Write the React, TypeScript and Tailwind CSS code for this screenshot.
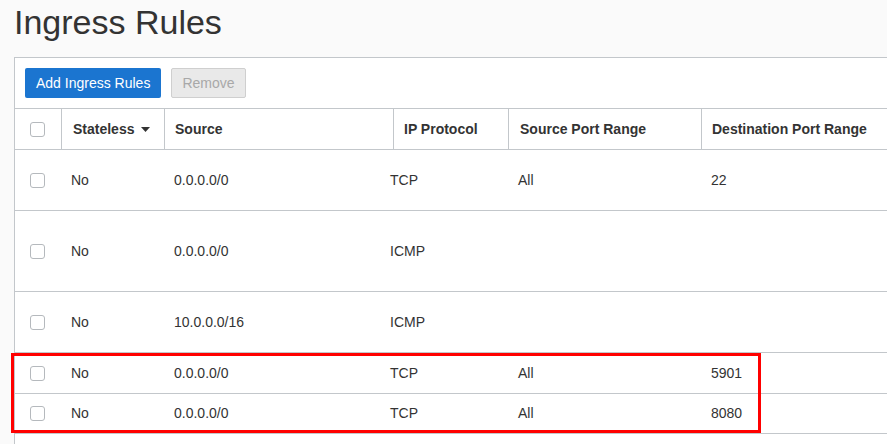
const rows = [
  { proto: 'TCP', src: '0.0.0.0/0', spr: 'All', dpr: '22', h: 'h-[61px]' },
  { proto: 'ICMP', src: '0.0.0.0/0', spr: '', dpr: '', h: 'h-[81px]' },
  { proto: 'ICMP', src: '10.0.0.0/16', spr: '', dpr: '', h: 'h-[61px]' },
  { proto: 'TCP', src: '0.0.0.0/0', spr: 'All', dpr: '5901', h: 'h-[41px]' },
  { proto: 'TCP', src: '0.0.0.0/0', spr: 'All', dpr: '8080', h: 'h-[40px]' },
]

function Checkbox() {
  return <span className="block w-[15px] h-[15px] rounded-[3px] border border-[#b5b9bd] bg-white" />
}

export default function App() {
  return (
    <div className="relative w-[887px] h-[444px] overflow-hidden bg-[#fafafa] text-[#333] font-['Liberation_Sans',Arial,sans-serif]">
      <h1 className="pl-[14px] pt-[2px] text-[34px] leading-[40px] font-normal text-[#333]">Ingress Rules</h1>

      <div className="absolute left-[14px] top-[57px] right-0 bottom-0 bg-white border-l border-t border-[#c3c7cb]">
        <div className="flex gap-[10px] px-[10px] pt-[10px] pb-[10px]">
          <button className="h-[30px] px-[11px] rounded-[2px] bg-[#1b75d0] text-white text-[14px]">Add Ingress Rules</button>
          <button className="h-[30px] px-[10px] rounded-[2px] bg-[#e9e9e9] border border-[#cfcfcf] text-[#a8a8a8] text-[14px]">Remove</button>
        </div>

        <div className="grid grid-cols-[46px_103px_229px_115px_193px_1fr] h-[42px] border-t border-b border-[#c3c7cb] text-[14px] font-bold">
          <div className="flex items-center pl-[15px]"><Checkbox /></div>
          <div className="flex items-center pl-[11px] border-l border-[#c3c7cb]">
            Stateless
            <svg width="9" height="5" viewBox="0 0 9 5" className="ml-[7px]"><path d="M0 0h9L4.5 5z" fill="#333" /></svg>
          </div>
          <div className="flex items-center pl-[10px] border-l border-[#c3c7cb]">Source</div>
          <div className="flex items-center pl-[10px] border-l border-[#c3c7cb]">IP Protocol</div>
          <div className="flex items-center pl-[11px] border-l border-[#c3c7cb]">Source Port Range</div>
          <div className="flex items-center pl-[10px] border-l border-[#c3c7cb] whitespace-nowrap">Destination Port Range</div>
        </div>

        {rows.map((r, i) => (
          <div key={i} className={`grid grid-cols-[56px_103px_216px_128px_193px_1fr] items-center border-b border-[#c3c7cb] text-[14px] ${r.h}`}>
            <div className="pl-[15px]"><Checkbox /></div>
            <div>No</div>
            <div>{r.src}</div>
            <div>{r.proto}</div>
            <div>{r.spr}</div>
            <div>{r.dpr}</div>
          </div>
        ))}
      </div>

      <div className="absolute left-[11px] top-[353px] w-[750px] h-[80px] border-[3px] border-[#ff0000]" />
    </div>
  )
}
